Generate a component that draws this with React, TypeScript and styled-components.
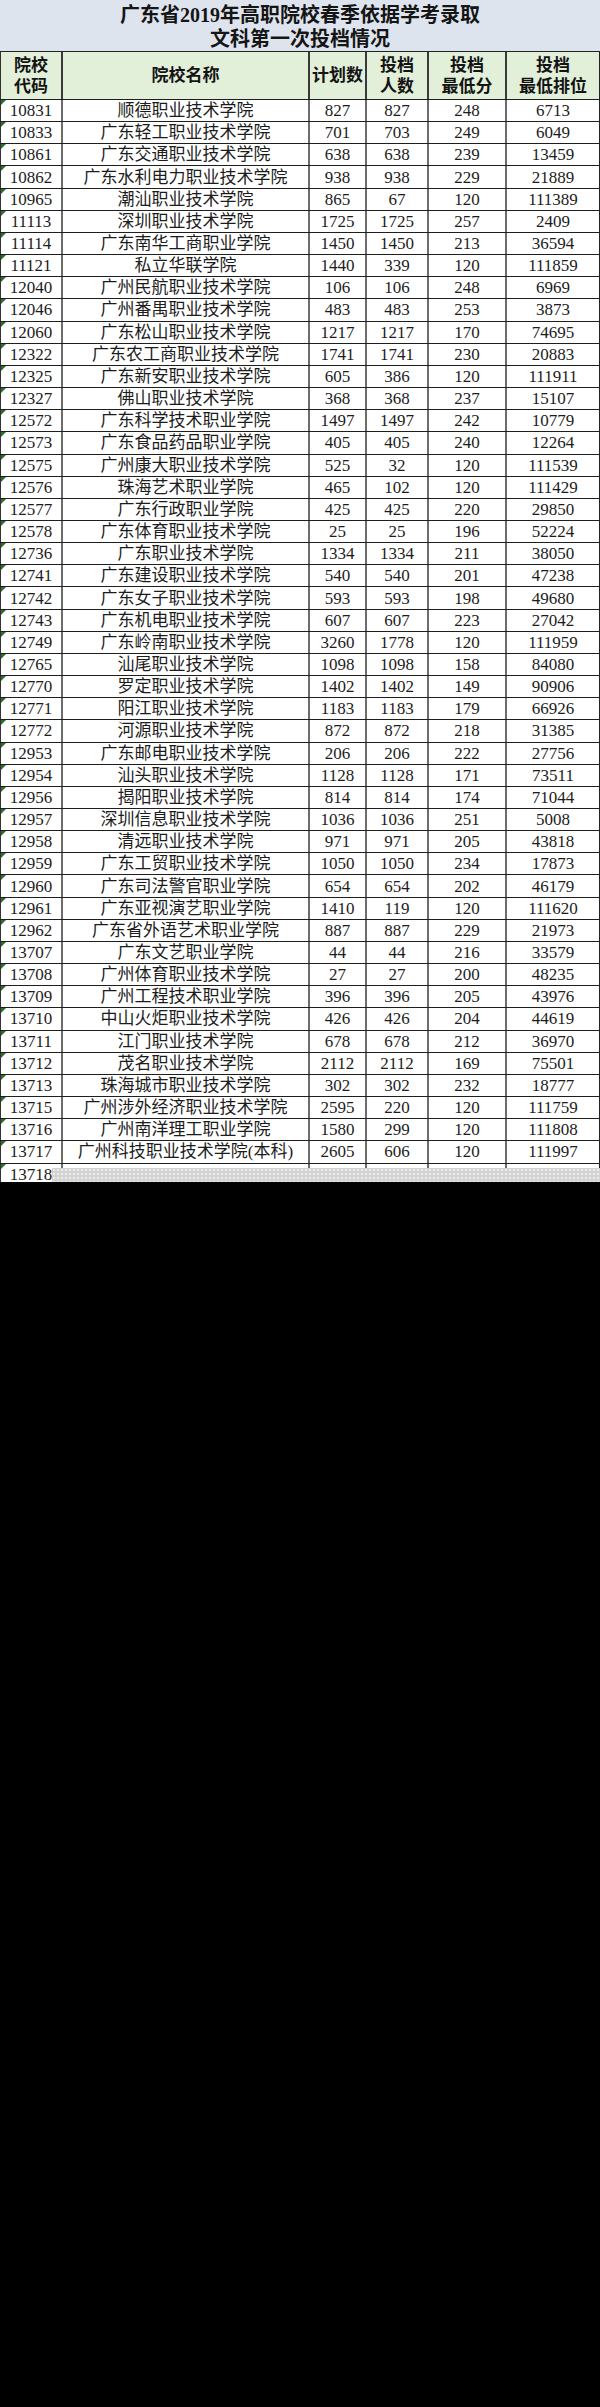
import React from "react";
import styled, { createGlobalStyle } from "styled-components";

const GlobalStyle = createGlobalStyle`
  html, body {
    margin: 0;
    padding: 0;
    background: #000;
  }
  #root {
    width: 600px;
  }
`;

const FONT = `"Liberation Serif", "Noto Sans CJK SC", serif`;
const COLS = "63px 247px 57px 62px 78px 93px";
const ROW_H = 22.17;

type RowData = [string, string, number, number, number, number];

const rows: RowData[] = [
  ["10831", "顺德职业技术学院", 827, 827, 248, 6713],
  ["10833", "广东轻工职业技术学院", 701, 703, 249, 6049],
  ["10861", "广东交通职业技术学院", 638, 638, 239, 13459],
  ["10862", "广东水利电力职业技术学院", 938, 938, 229, 21889],
  ["10965", "潮汕职业技术学院", 865, 67, 120, 111389],
  ["11113", "深圳职业技术学院", 1725, 1725, 257, 2409],
  ["11114", "广东南华工商职业学院", 1450, 1450, 213, 36594],
  ["11121", "私立华联学院", 1440, 339, 120, 111859],
  ["12040", "广州民航职业技术学院", 106, 106, 248, 6969],
  ["12046", "广州番禺职业技术学院", 483, 483, 253, 3873],
  ["12060", "广东松山职业技术学院", 1217, 1217, 170, 74695],
  ["12322", "广东农工商职业技术学院", 1741, 1741, 230, 20883],
  ["12325", "广东新安职业技术学院", 605, 386, 120, 111911],
  ["12327", "佛山职业技术学院", 368, 368, 237, 15107],
  ["12572", "广东科学技术职业学院", 1497, 1497, 242, 10779],
  ["12573", "广东食品药品职业学院", 405, 405, 240, 12264],
  ["12575", "广州康大职业技术学院", 525, 32, 120, 111539],
  ["12576", "珠海艺术职业学院", 465, 102, 120, 111429],
  ["12577", "广东行政职业学院", 425, 425, 220, 29850],
  ["12578", "广东体育职业技术学院", 25, 25, 196, 52224],
  ["12736", "广东职业技术学院", 1334, 1334, 211, 38050],
  ["12741", "广东建设职业技术学院", 540, 540, 201, 47238],
  ["12742", "广东女子职业技术学院", 593, 593, 198, 49680],
  ["12743", "广东机电职业技术学院", 607, 607, 223, 27042],
  ["12749", "广东岭南职业技术学院", 3260, 1778, 120, 111959],
  ["12765", "汕尾职业技术学院", 1098, 1098, 158, 84080],
  ["12770", "罗定职业技术学院", 1402, 1402, 149, 90906],
  ["12771", "阳江职业技术学院", 1183, 1183, 179, 66926],
  ["12772", "河源职业技术学院", 872, 872, 218, 31385],
  ["12953", "广东邮电职业技术学院", 206, 206, 222, 27756],
  ["12954", "汕头职业技术学院", 1128, 1128, 171, 73511],
  ["12956", "揭阳职业技术学院", 814, 814, 174, 71044],
  ["12957", "深圳信息职业技术学院", 1036, 1036, 251, 5008],
  ["12958", "清远职业技术学院", 971, 971, 205, 43818],
  ["12959", "广东工贸职业技术学院", 1050, 1050, 234, 17873],
  ["12960", "广东司法警官职业学院", 654, 654, 202, 46179],
  ["12961", "广东亚视演艺职业学院", 1410, 119, 120, 111620],
  ["12962", "广东省外语艺术职业学院", 887, 887, 229, 21973],
  ["13707", "广东文艺职业学院", 44, 44, 216, 33579],
  ["13708", "广州体育职业技术学院", 27, 27, 200, 48235],
  ["13709", "广州工程技术职业学院", 396, 396, 205, 43976],
  ["13710", "中山火炬职业技术学院", 426, 426, 204, 44619],
  ["13711", "江门职业技术学院", 678, 678, 212, 36970],
  ["13712", "茂名职业技术学院", 2112, 2112, 169, 75501],
  ["13713", "珠海城市职业技术学院", 302, 302, 232, 18777],
  ["13715", "广州涉外经济职业技术学院", 2595, 220, 120, 111759],
  ["13716", "广州南洋理工职业学院", 1580, 299, 120, 111808],
  ["13717", "广州科技职业技术学院(本科)", 2605, 606, 120, 111997],
];

const Page = styled.div`
  width: 600px;
  height: 2407px;
  background: #000;
`;

const Sheet = styled.div`
  position: relative;
  width: 600px;
  height: 1182px;
  overflow: hidden;
  background: #fff;
  font-family: ${FONT};
  color: #1c1c1c;
`;

const Title = styled.div`
  box-sizing: border-box;
  height: 52px;
  padding-top: 3px;
  background: #dee4ee;
  border-bottom: 1px solid #222;
  display: flex;
  flex-direction: column;
  align-items: center;
  font-size: 20px;
  line-height: 24px;
  font-weight: 700;
  color: #151515;
`;

const Grid = styled.div<{ $h: number; $bg?: string }>`
  box-sizing: border-box;
  display: grid;
  grid-template-columns: ${COLS};
  height: ${(p) => p.$h}px;
  background: ${(p) => p.$bg || "#fff"};
  border-bottom: 1px solid #1e1e1e;
`;

const Cell = styled.div<{ $first?: boolean; $last?: boolean; $mark?: boolean }>`
  position: relative;
  box-sizing: border-box;
  display: flex;
  align-items: center;
  justify-content: center;
  white-space: nowrap;
  border-right: ${(p) => (p.$last ? "1px solid #222" : "2px solid #6c6c6c")};
  border-left: ${(p) => (p.$first ? "1px solid #333" : "none")};
  font-size: 17px;
  line-height: 1;
  &::before {
    content: "";
    display: ${(p) => (p.$mark ? "block" : "none")};
    position: absolute;
    left: 0;
    top: 0;
    width: 0;
    height: 0;
    border-top: 5px solid #2f6b2f;
    border-right: 5px solid transparent;
  }
`;

const HeadCell = styled(Cell)`
  flex-direction: column;
  font-weight: 700;
  font-size: 17px;
  line-height: 21px;
  color: #141414;
  border-right-color: ${(p) => (p.$last ? "#222" : "#3a3a3a")};
`;

const ScrollBar = styled.div`
  position: absolute;
  left: 52px;
  right: 0;
  top: 1168px;
  height: 14px;
  background-color: #d3d3d3;
  background-image: radial-gradient(circle, #ececec 0.9px, transparent 1.2px);
  background-size: 4px 4px;
`;

const headers: string[][] = [
  ["院校", "代码"],
  ["院校名称"],
  ["计划数"],
  ["投档", "人数"],
  ["投档", "最低分"],
  ["投档", "最低排位"],
];

export default function App() {
  return (
    <Page>
      <GlobalStyle />
      <Sheet>
        <Title>
          <span>广东省2019年高职院校春季依据学考录取</span>
          <span>文科第一次投档情况</span>
        </Title>
        <Grid $h={48} $bg="#e2efd9">
          {headers.map((h, i) => (
            <HeadCell key={i} $first={i === 0} $last={i === 5}>
              {h.map((line) => (
                <span key={line}>{line}</span>
              ))}
            </HeadCell>
          ))}
        </Grid>
        {rows.map((r) => (
          <Grid key={r[0]} $h={ROW_H}>
            {r.map((v, i) => (
              <Cell key={i} $first={i === 0} $last={i === 5} $mark={i === 0}>
                {v}
              </Cell>
            ))}
          </Grid>
        ))}
        <Grid $h={ROW_H}>
          {["13718", "", "", "", "", ""].map((v, i) => (
            <Cell key={i} $first={i === 0} $last={i === 5} $mark={i === 0}>
              {v}
            </Cell>
          ))}
        </Grid>
        <ScrollBar />
      </Sheet>
    </Page>
  );
}
